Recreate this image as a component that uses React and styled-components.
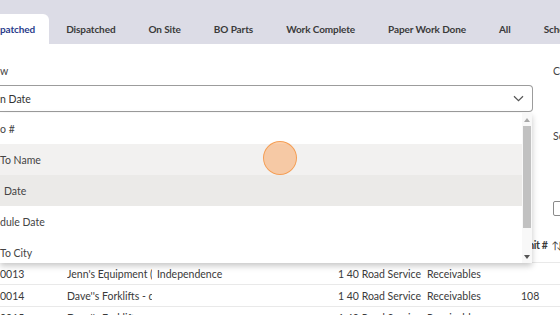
import React from 'react';
import styled, { createGlobalStyle } from 'styled-components';

const GlobalStyle = createGlobalStyle`
    html, body {
        margin: 0;
        padding: 0;
        background: #fff;
        overflow: hidden;
    }
    body {
        font-family: Lato, "Open Sans", sans-serif;
        color: #333;
    }
`;

const Page = styled.div`
    position: relative;
    width: 560px;
    height: 315px;
    overflow: hidden;
`;

const TabBar = styled.div`
    display: flex;
    align-items: flex-end;
    gap: 1px;
    height: 44px;
    background: #dcdce6;
    white-space: nowrap;
`;

const Tab = styled.div`
    flex: none;
    display: flex;
    align-items: center;
    height: 30px;
    padding: ${props => props.active ? '0 14px 0 0' : '0 16px'};
    font-size: 10px;
    font-weight: 700;
    letter-spacing: -0.1px;
    color: ${props => props.active ? '#2b3c8c' : '#3a3a3a'};
    background: ${props => props.active ? '#fff' : 'transparent'};
    border-radius: ${props => props.active ? '0 6px 0 0' : '0'};
`;

const Filters = styled.div`
    display: flex;
    gap: 20px;
    height: 191px;
    padding-top: 20px;
    box-sizing: border-box;
`;

const Field = styled.div`
    position: relative;
    flex: none;
    width: ${props => props.width}px;
    display: flex;
    flex-direction: column;
`;

const Label = styled.div`
    height: 14px;
    line-height: 14px;
    font-size: 10.5px;
    color: #444;
    margin-bottom: ${props => props.gap || 7}px;
    white-space: nowrap;
`;

const Select = styled.div`
    display: flex;
    align-items: center;
    justify-content: space-between;
    height: 27px;
    padding: 0 8px 0 0;
    box-sizing: border-box;
    border: 1px solid #9c9c9c;
    border-left: none;
    border-radius: 0 4px 4px 0;
    font-size: 10.5px;
    color: #333;
`;

const Dropdown = styled.div`
    position: absolute;
    top: 49px;
    left: 0;
    width: 532px;
    height: 150px;
    display: flex;
    background: #fff;
    box-shadow: 0 3px 6px rgba(0, 0, 0, 0.22);
    z-index: 5;
`;

const Options = styled.div`
    flex: 1;
    display: flex;
    flex-direction: column;
    overflow: hidden;
`;

const Option = styled.div`
    flex: none;
    height: 31px;
    display: flex;
    align-items: center;
    padding-left: ${props => props.indent || 0}px;
    font-size: 10.5px;
    color: #444;
    background: ${props => props.selected ? '#ebeae8' : props.hover ? '#f2f1f0' : '#fff'};
`;

const Scrollbar = styled.div`
    flex: none;
    width: 10px;
    display: flex;
    flex-direction: column;
    align-items: center;
    background: #f8f8f8;
`;

const Arrow = styled.div`
    flex: none;
    height: 13px;
    display: flex;
    align-items: center;
    justify-content: center;
`;

const Thumb = styled.div`
    width: 8px;
    height: 102px;
    background: #c1c1c1;
`;

const Track = styled.div`
    flex: 1;
`;

const Checkbox = styled.div`
    width: 13px;
    height: 13px;
    border: 1px solid #8a8a8a;
    border-radius: 2px;
    margin-top: ${props => props.top}px;
`;

const Table = styled.div`
    display: flex;
    flex-direction: column;
`;

const Row = styled.div`
    display: grid;
    grid-template-columns: 67px 90px 181px 89px 94px 80px;
    height: ${props => props.head ? 28 : 22}px;
    align-items: ${props => props.head ? 'start' : 'center'};
    box-sizing: border-box;
    padding-top: ${props => props.head ? 4 : 0}px;
    border-bottom: 1px solid #e9e9e9;
    font-size: 10.5px;
    color: #3a3a3a;
    white-space: nowrap;
`;

const Cell = styled.div`
    overflow: hidden;
    margin-right: 5px;
    font-weight: ${props => props.head ? 700 : 400};
    letter-spacing: ${props => props.head ? '-0.4px' : 'normal'};
`;

const SortIcon = styled.span`
    margin-left: 4px;
    font-size: 10px;
    letter-spacing: -2.5px;
    font-weight: 400;
`;

const ClickMark = styled.div`
    position: absolute;
    left: 263px;
    top: 141px;
    width: 34px;
    height: 34px;
    box-sizing: border-box;
    border-radius: 50%;
    background: rgba(248, 175, 115, 0.6);
    border: 1.5px solid rgba(244, 150, 70, 0.85);
    z-index: 10;
`;

const tabs = ['Dispatched', 'On Site', 'BO Parts', 'Work Complete', 'Paper Work Done', 'All', 'Scheduled'];

const options = [
    { label: 'o #' },
    { label: 'To Name', hover: true },
    { label: 'Date', selected: true, indent: 4 },
    { label: 'dule Date' },
    { label: 'To City' },
];

const rows = [
    ['0013', 'Jenn\'s Equipment (KC)', 'Independence', '1 40 Road Service', 'Receivables', ''],
    ['0014', 'Dave\'\'s Forklifts - d', '', '1 40 Road Service', 'Receivables', '108'],
    ['0015', 'Dave\'\'s Forklifts - d', '', '1 40 Road Service', 'Receivables', ''],
];

const Chevron = () => (
    <svg width='11' height='7' viewBox='0 0 11 7'>
        <path d='M1 1.2 L5.5 5.6 L10 1.2' fill='none' stroke='#555' strokeWidth='1.2' />
    </svg>
);

const Tri = ({ down }) => (
    <svg width='6' height='4' viewBox='0 0 6 4'>
        <path d={down ? 'M0 0 L6 0 L3 4 Z' : 'M0 4 L6 4 L3 0 Z'} fill={down ? '#555' : '#a8a8a8'} />
    </svg>
);

export default function App () {
    return (
        <Page>
            <GlobalStyle />
            <TabBar>
                <Tab active>patched</Tab>
                {tabs.map(t => <Tab key={t}>{t}</Tab>)}
            </TabBar>

            <Filters>
                <Field width={533}>
                    <Label>w</Label>
                    <Select>
                        <span>n Date</span>
                        <Chevron />
                    </Select>
                    <Dropdown>
                        <Options>
                            {options.map(o => (
                                <Option key={o.label} hover={o.hover} selected={o.selected} indent={o.indent}>
                                    {o.label}
                                </Option>
                            ))}
                        </Options>
                        <Scrollbar>
                            <Arrow><Tri /></Arrow>
                            <Thumb />
                            <Track />
                            <Arrow><Tri down /></Arrow>
                        </Scrollbar>
                    </Dropdown>
                </Field>
                <Field width={100}>
                    <Label gap={51}>Customer</Label>
                    <Label>Sort</Label>
                    <Checkbox top={51} />
                </Field>
            </Filters>

            <Table>
                <Row head>
                    <Cell head />
                    <Cell head />
                    <Cell head />
                    <Cell head />
                    <Cell head />
                    <Cell head>Unit #<SortIcon>↑↓</SortIcon></Cell>
                </Row>
                {rows.map(r => (
                    <Row key={r[0]}>
                        {r.map((c, i) => <Cell key={i}>{c}</Cell>)}
                    </Row>
                ))}
            </Table>

            <ClickMark />
        </Page>
    );
}
